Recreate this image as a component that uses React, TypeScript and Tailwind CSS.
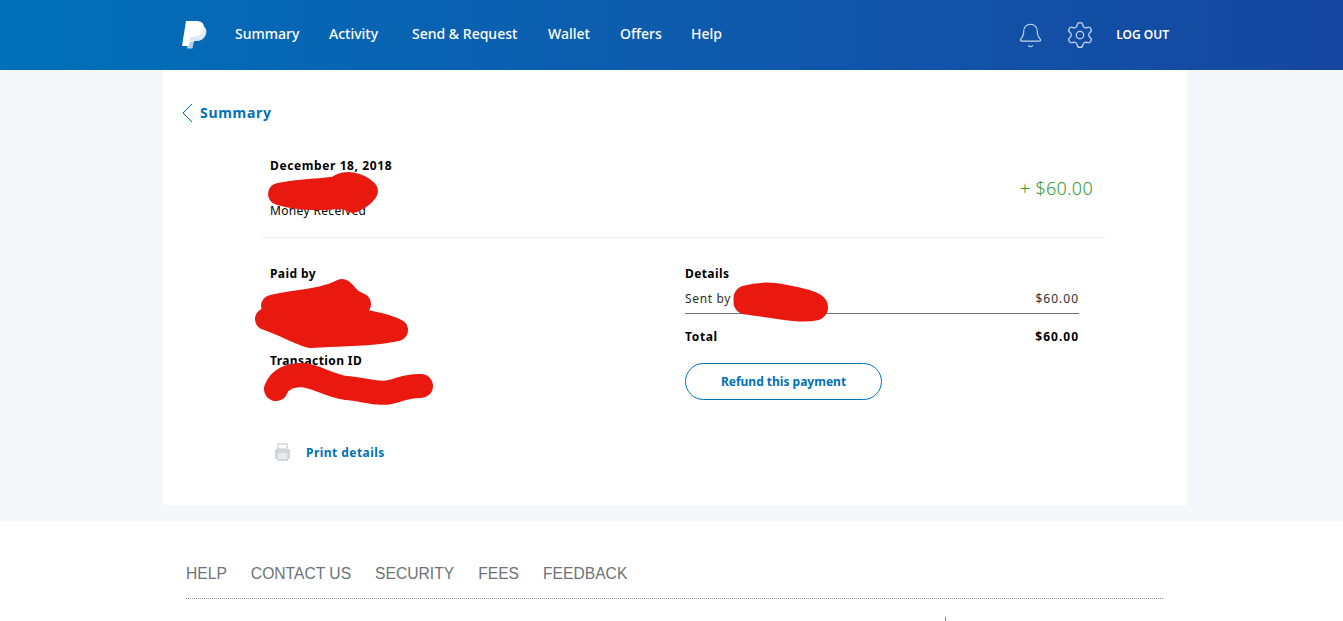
import { Bell, Settings } from "lucide-react";

const NAV = [
  { label: "Summary", width: "w-[64px]" },
  { label: "Activity", width: "w-[53px]" },
  { label: "Send & Request", width: "w-[106px]" },
  { label: "Wallet", width: "w-[42px]" },
  { label: "Offers", width: "w-[41px]" },
  { label: "Help", width: "w-[31px]" },
];
const FOOTER = ["HELP", "CONTACT US", "SECURITY", "FEES", "FEEDBACK"];

function Logo() {
  return (
    <svg width="25" height="28" viewBox="0 0 25 28" className="shrink-0">
      <path d="M8 4h9c5 0 8 3 7 8-1 5-5 8-10 8h-2l-1.500 7.500H5z" fill="#b3d0e6" />
      <path d="M4 0h10c5 0 8 2 8 6 0 6-4 10-10 10H8.500L7 25H0z" fill="#ffffff" />
      <path d="M8.500 16H12c6 0 10-4 10-10 2 1.500 2.800 3.500 2.200 6-1 5-5 8-10 8h-2l-.3 1H7.800z" fill="#dcebf5" />
    </svg>
  );
}

// the red marker scribbles painted over the screenshot
function Scribble({ className, width, height, d, stroke }: { className: string; width: number; height: number; d: string; stroke: number }) {
  return (
    <svg width={width} height={height} viewBox={`0 0 ${width} ${height}`} className={`absolute ${className}`}>
      <path d={d} fill="none" stroke="#e9190f" strokeWidth={stroke} strokeLinecap="round" strokeLinejoin="round" />
    </svg>
  );
}

export default function App() {
  return (
    <div className="h-[621px] overflow-hidden bg-white font-['Noto_Sans',sans-serif]">
      <header className="h-[70px] bg-gradient-to-r from-[#0070ba] to-[#1546a0]">
        <div className="flex h-full items-center pl-[182px] pr-[174px]">
          <Logo />
          <nav className="mb-[4px] ml-[28px] flex gap-[30px] text-[14px] font-medium text-white">
            {NAV.map((item) => (
              <a key={item.label} className={`${item.width} whitespace-nowrap`}>
                {item.label}
              </a>
            ))}
          </nav>
          <div className="ml-auto flex items-center text-white">
            <Bell size={27} strokeWidth={1} className="text-[#c5d6ea]" />
            <Settings size={30} strokeWidth={1} className="ml-[21px] text-[#c5d6ea]" />
            <span className="ml-[21px] text-[12px] font-semibold">LOG OUT</span>
          </div>
        </div>
      </header>

      <main className="bg-[#f5f7fa] pb-4">
        <div className="relative ml-[163px] h-[435px] w-[1024px] bg-white">
          <div className="flex items-center pl-[19px] pt-[32px] text-[#0070ba]">
            <svg width="11" height="20" viewBox="0 0 11 20">
              <path d="M10 1 1 10l9 9" fill="none" stroke="#0070ba" strokeWidth="1" />
            </svg>
            <span className="ml-[7px] text-[14px] font-bold leading-[22px] tracking-[0.7px]">Summary</span>
          </div>

          <div className="ml-[99px] mr-[82px] mt-[33px] border-b border-[#f1f1f1] pb-[18px]">
            <div className="flex items-center justify-between pl-[8px] pr-[12px]">
              <div className="text-[12px] leading-[17px] text-black">
                <p className="font-bold tracking-[0.6px]">December 18, 2018</p>
                <p className="mt-[28px] tracking-[0.35px]">Money Received</p>
              </div>
              <p className="text-[18px] font-light tracking-[0.3px] text-[#2f9a2f]">+ $60.00</p>
            </div>
          </div>

          <div className="mt-[27px] flex pl-[107px]">
            <div className="w-[415px] text-[12px] font-bold leading-[17px] tracking-[0.4px] text-black">
              <p>Paid by</p>
              <p className="mt-[70px]">Transaction ID</p>
              <div className="mt-[74px] flex items-center text-[#0070ba]">
                <svg width="17" height="18" viewBox="0 0 17 18" className="ml-[4px]">
                  <path d="M4 1h9v5H4z" fill="none" stroke="#cfd6dc" strokeWidth="1.500" />
                  <path d="M1 7a1 1 0 0 1 1-1h13a1 1 0 0 1 1 1v9H14v2H3v-2H1z" fill="#cfd6dc" />
                  <path d="M4 11h9M4 13h9M4 15h9" stroke="#ffffff" strokeWidth="1" />
                </svg>
                <span className="ml-[15px] tracking-[0.45px]">Print details</span>
              </div>
            </div>
            <div className="w-[394px] text-[12px] leading-[17px] text-black">
              <p className="font-bold tracking-[0.4px]">Details</p>
              <div className="mt-[8px] flex justify-between border-b border-[#6c7378] pb-[6px] tracking-[0.65px] text-[#2c2e2f]">
                <span>Sent by</span>
                <span className="tracking-[1px]">$60.00</span>
              </div>
              <div className="mt-[14px] flex justify-between font-bold tracking-[0.65px]">
                <span>Total</span>
                <span className="tracking-[1px]">$60.00</span>
              </div>
              <button className="mt-[18px] block h-[37px] w-[197px] rounded-full border border-[#0070ba] text-[12px] font-bold text-[#0070ba]">
                Refund this payment
              </button>
            </div>
          </div>

          <Scribble className="left-[100px] top-[100px]" width={125} height={50} stroke={22} d="M16 24C35 20 55 20 74 17C82 10 96 13 104 21C100 28 92 30 90 32C85 28 80 28 74 28C55 30 35 30 16 24Z" />
          <Scribble className="left-[85px] top-[200px]" width={170} height={90} stroke={22} d="M24 36C50 30 75 30 94 20C100 24 100 30 112 34C90 40 50 38 24 36ZM18 49C40 50 80 40 100 46C115 52 135 52 149 60C125 66 90 65 62 67C45 62 30 52 18 49Z" />
          <Scribble className="left-[95px] top-[285px]" width={180} height={55} stroke={24} d="M18 34C22 24 32 20 45 20C60 22 70 30 88 33C105 34 120 40 132 37C145 34 150 30 163 31" />
          <Scribble className="left-[565px] top-[208px]" width={110} height={50} stroke={25} d="M18 20C35 15 50 17 70 22C80 24 90 28 87 30C70 34 40 26 18 24Z" />
        </div>
      </main>

      <footer className="pl-[186px] pr-[180px] pt-[43px] font-['Liberation_Sans',sans-serif]">
        <div className="flex gap-[24px] border-b border-dotted border-[#8c8c8c] pb-[15px] text-[15.65px] leading-[19px] text-[#6c7378]">
          {FOOTER.map((item) => (
            <a key={item}>{item}</a>
          ))}
        </div>
        <div className="ml-[759px] mt-[18px] h-[4px] w-px bg-[#8c8c8c]" />
      </footer>
    </div>
  );
}
